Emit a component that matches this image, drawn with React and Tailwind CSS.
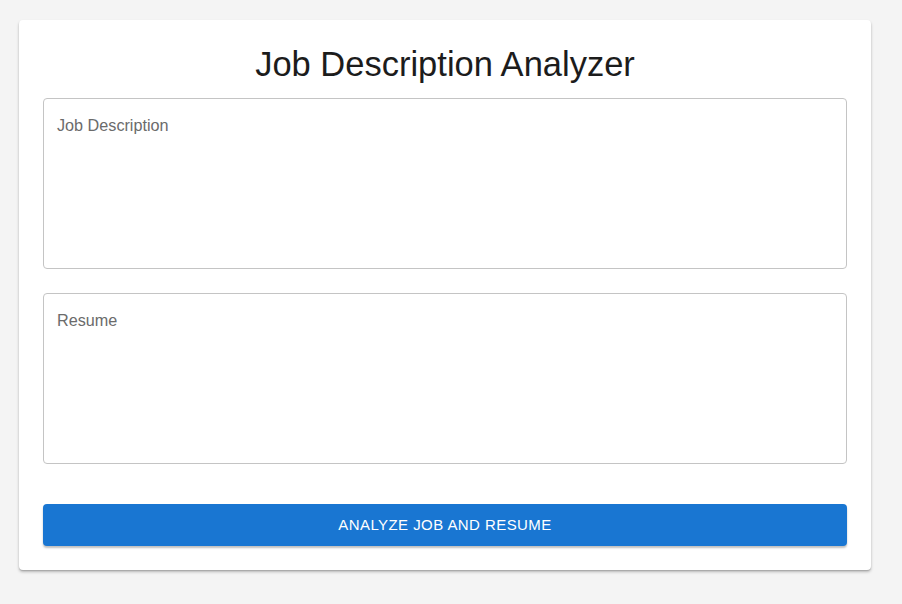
export default function App() {
  return (
    <div className="min-h-screen bg-[#f4f4f4] px-[19px] pt-[20px] font-['Liberation_Sans',Arial,sans-serif]">
      <div className="w-[852px] rounded-[4px] bg-white p-6 shadow-[0_2px_3px_rgba(0,0,0,0.25),0_1px_1px_rgba(0,0,0,0.12)]">
        <h1 className="mb-[14px] text-center text-[34.5px] leading-[40px] text-[#1c1c1c]">
          Job Description Analyzer
        </h1>
        <textarea
          placeholder="Job Description"
          className="block h-[171px] w-full resize-none rounded-[4px] border border-[#c4c4c4] px-[13px] pt-[15px] pb-[16px] text-[16.2px] leading-[23px] text-[#333] placeholder:text-[#6b6b6b] focus:outline-none"
        />
        <textarea
          placeholder="Resume"
          className="mt-[24px] block h-[171px] w-full resize-none rounded-[4px] border border-[#c4c4c4] px-[13px] pt-[15px] pb-[16px] text-[16.2px] leading-[23px] text-[#333] placeholder:text-[#6b6b6b] focus:outline-none"
        />
        <button className="mt-[40px] flex h-[42px] w-full items-center justify-center rounded-[4px] bg-[#1976d2] text-[15px] uppercase tracking-[0.43px] text-white shadow-[0_2px_2px_rgba(0,0,0,0.25)]">
          Analyze Job and Resume
        </button>
      </div>
    </div>
  );
}
